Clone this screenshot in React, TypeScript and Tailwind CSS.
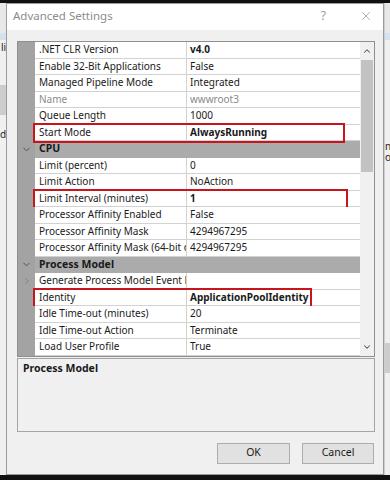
import { ChevronDown, ChevronRight, ChevronUp, X } from 'lucide-react'

type Row =
  | { kind: 'header'; label: string; expander: 'down' }
  | { kind: 'prop'; name: string; value: string; bold?: boolean; dim?: boolean; expander?: 'right'; box?: number }

const rows: Row[] = [
  { kind: 'prop', name: '.NET CLR Version', value: 'v4.0', bold: true },
  { kind: 'prop', name: 'Enable 32-Bit Applications', value: 'False' },
  { kind: 'prop', name: 'Managed Pipeline Mode', value: 'Integrated' },
  { kind: 'prop', name: 'Name', value: 'wwwroot3', dim: true },
  { kind: 'prop', name: 'Queue Length', value: '1000' },
  { kind: 'prop', name: 'Start Mode', value: 'AlwaysRunning', bold: true, box: 312 },
  { kind: 'header', label: 'CPU', expander: 'down' },
  { kind: 'prop', name: 'Limit (percent)', value: '0' },
  { kind: 'prop', name: 'Limit Action', value: 'NoAction' },
  { kind: 'prop', name: 'Limit Interval (minutes)', value: '1', bold: true, box: 315 },
  { kind: 'prop', name: 'Processor Affinity Enabled', value: 'False' },
  { kind: 'prop', name: 'Processor Affinity Mask', value: '4294967295' },
  { kind: 'prop', name: 'Processor Affinity Mask (64-bit option)', value: '4294967295' },
  { kind: 'header', label: 'Process Model', expander: 'down' },
  { kind: 'prop', name: 'Generate Process Model Event Log Entry', value: '', expander: 'right' },
  { kind: 'prop', name: 'Identity', value: 'ApplicationPoolIdentity', bold: true, box: 279 },
  { kind: 'prop', name: 'Idle Time-out (minutes)', value: '20' },
  { kind: 'prop', name: 'Idle Time-out Action', value: 'Terminate' },
  { kind: 'prop', name: 'Load User Profile', value: 'True' },
]

function GridRow({ row }: { row: Row }) {
  if (row.kind === 'header') {
    return (
      <div className="flex h-[16.5px]">
        <div className="w-[17px] bg-[#a3a3a3] flex items-center justify-center">
          <ChevronDown size={11} strokeWidth={2} className="text-[#4a4a4a]" />
        </div>
        <div className="flex-1 bg-[#ababab] px-[4px] flex items-center font-bold text-[10.5px] text-[#1a1a1a]">
          {row.label}
        </div>
      </div>
    )
  }
  return (
    <div className="flex h-[16.5px] relative">
      <div className="w-[17px] bg-[#a3a3a3] flex items-center justify-center">
        {row.expander === 'right' && <ChevronRight size={10} strokeWidth={2} className="text-[#7a7a7a]" />}
      </div>
      <div
        className={`w-[152px] bg-white border-b border-r border-[#d2d2d2] px-[4px] flex items-center whitespace-nowrap overflow-hidden ${
          row.dim ? 'text-[#8a8a8a]' : 'text-[#1a1a1a]'
        }`}
      >
        {row.name}
      </div>
      <div
        className={`flex-1 bg-white border-b border-[#d2d2d2] px-[3px] flex items-center whitespace-nowrap overflow-hidden ${
          row.dim ? 'text-[#8a8a8a]' : 'text-[#1a1a1a]'
        } ${row.bold ? 'font-bold' : ''}`}
      >
        {row.value}
      </div>
      {row.box && (
        <div className="absolute left-[15px] top-[-1.5px] h-[20px] border-2 border-[#c8151b]" style={{ width: row.box }} />
      )}
    </div>
  )
}

export default function App() {
  return (
    <div
      className="w-[390px] h-[480px] bg-black flex flex-col overflow-hidden text-[10px]"
      style={{ fontFamily: '"Noto Sans", "Open Sans", sans-serif' }}
    >
      <div className="h-[3px] bg-[#111]" />
      <div className="flex h-[472px]">
        {/* app behind, left edge */}
        <div className="w-[6px] bg-[#f0f0f0] flex flex-col overflow-hidden">
          <div className="h-[30px] bg-[#e8e8e8]" />
          <div className="h-[7px] bg-[#d5e1ee]" />
          <div className="h-[14px] text-[#222] pl-[1px] leading-[14px]">li</div>
          <div className="h-[31px]" />
          <div className="h-[30px] bg-[#cdcdcd]" />
          <div className="h-[12px]" />
          <div className="h-[14px] text-[#222] leading-[14px]">de</div>
        </div>

        {/* dialog */}
        <div className="w-[378px] bg-[#f0f0f0] border border-[#9a9a9a] flex flex-col">
          <div className="h-[26px] bg-white flex items-center pl-[6px] pr-[10px] pb-[2px]">
            <span className="text-[11.5px] text-[#8c8c8c]">Advanced Settings</span>
            <span className="ml-auto mr-[33px] text-[12px] text-[#9a9a9a]">?</span>
            <X size={14} strokeWidth={1.2} className="text-[#8c8c8c]" />
          </div>

          <div className="flex flex-col pl-[10px] pr-[8px] pt-[11px]">
            {/* property grid */}
            <div className="flex border border-[#8f8f8f] bg-white">
              <div className="w-[342px] flex flex-col">
                {rows.map((r, i) => (
                  <GridRow key={i} row={r} />
                ))}
              </div>
              <div className="w-[14px] bg-[#f0f0f0] flex flex-col">
                <div className="h-[18px] flex items-center justify-center">
                  <ChevronUp size={10} strokeWidth={2.5} className="text-[#555]" />
                </div>
                <div className="h-[112px] mx-[1px] bg-[#c2c2c2]" />
                <div className="flex-1" />
                <div className="h-[17px] flex items-center justify-center">
                  <ChevronDown size={10} strokeWidth={2.5} className="text-[#555]" />
                </div>
              </div>
            </div>

            {/* description */}
            <div className="mt-[1.5px] h-[74px] border border-[#a5a5a5] bg-[#f0f0f0] px-[5px] pt-[2px]">
              <div className="font-bold text-[#1a1a1a] text-[10.5px]">Process Model</div>
            </div>

            {/* buttons */}
            <div className="flex justify-end gap-[12px] mt-[10.5px] mr-[1px]">
              <button className="w-[73px] h-[21px] bg-[#e1e1e1] border border-[#adadad] text-[10.5px] text-[#1a1a1a]">
                OK
              </button>
              <button className="w-[72px] h-[21px] bg-[#e1e1e1] border border-[#adadad] text-[10.5px] text-[#1a1a1a]">
                Cancel
              </button>
            </div>
          </div>
        </div>

        {/* app behind, right edge */}
        <div className="flex-1 bg-[#f0f0f0] border-l border-[#cfcfcf] flex flex-col overflow-hidden">
          <div className="h-[30px] bg-[#e8e8e8]" />
          <div className="h-[7px] bg-[#d5e1ee]" />
          <div className="h-[101px]" />
          <div className="text-[#222] leading-[11px] whitespace-nowrap">ne</div>
          <div className="text-[#222] leading-[11px] whitespace-nowrap">or</div>
          <div className="h-[180px]" />
          <div className="h-[30px] bg-[#cdcdcd]" />
        </div>
      </div>
      <div className="flex-1 bg-[#111]" />
    </div>
  )
}
